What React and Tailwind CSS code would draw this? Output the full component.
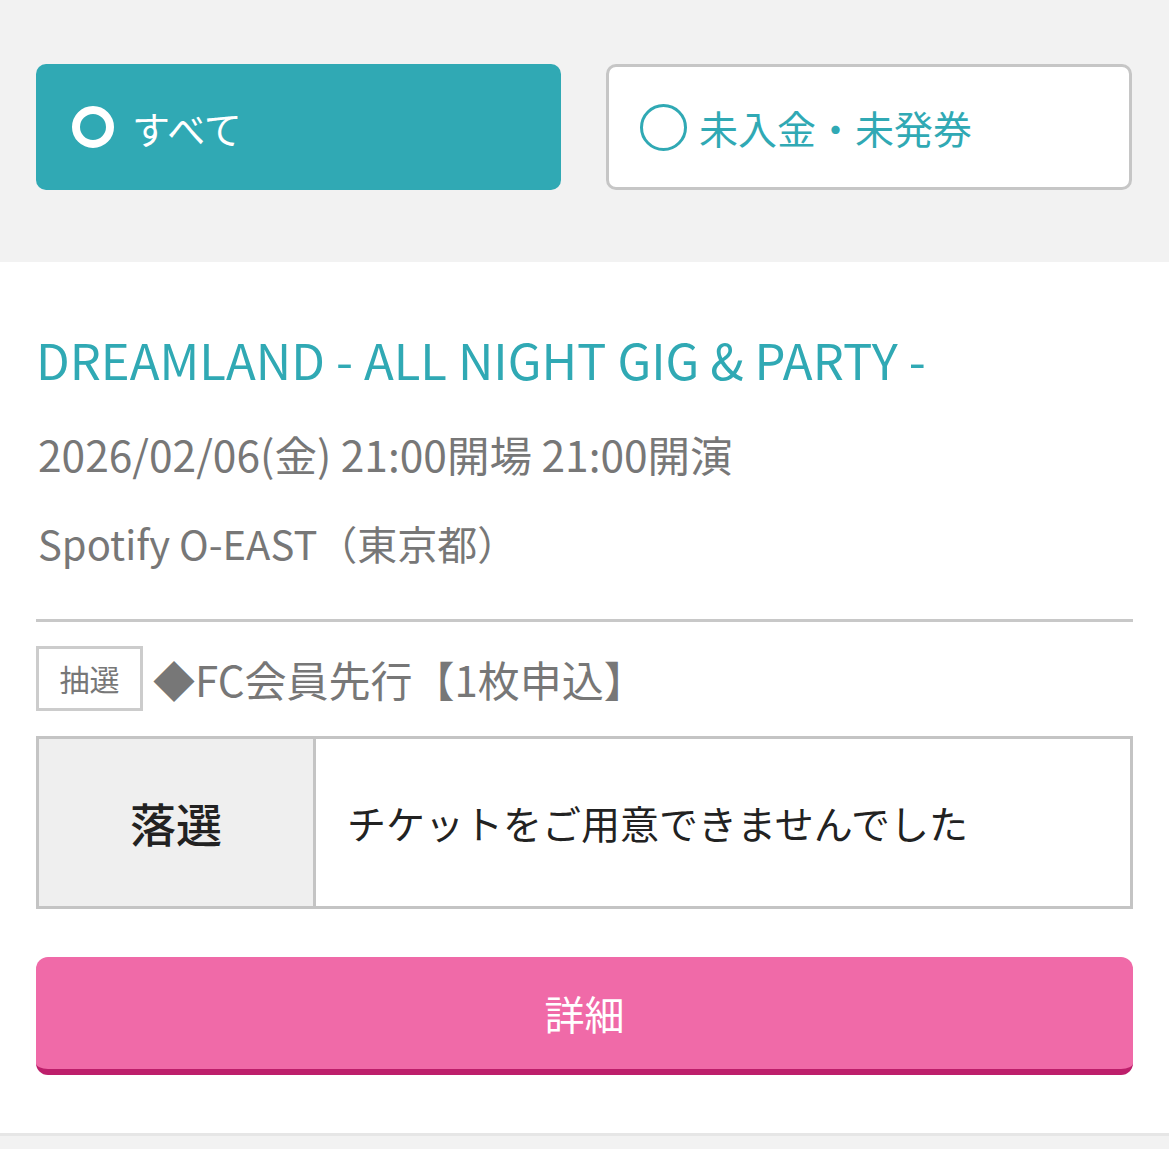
export default function App() {
  const font = { fontFamily: '"Noto Sans CJK JP", "Noto Sans", sans-serif' };
  return (
    <div className="min-h-[1149px] bg-[#f2f2f2]" style={font}>
      <div className="flex gap-[45px] pl-[36px] pr-[37px] pt-[64px] pb-[72px]">
        <button className="flex h-[126px] flex-1 items-center gap-[18px] rounded-[10px] bg-[#30a9b4] pl-[36px] text-[38px] text-white">
          <span className="box-border block h-[42px] w-[42px] rounded-full border-[8px] border-white" />
          <span>すべて</span>
        </button>
        <button className="flex h-[126px] flex-1 items-center gap-[12px] rounded-[10px] border-[3px] border-[#c6c6c6] bg-white pl-[31px] text-[39px] text-[#30a9b4]">
          <span className="box-border block h-[47px] w-[47px] rounded-full border-[3px] border-[#30a9b4]" />
          <span>未入金・未発券</span>
        </button>
      </div>
      <div className="border-b-[3px] border-[#e6e6e6] bg-white px-[36px] pt-[65px] pb-[58px]">
        <h2 className="text-[49px] leading-[64px] text-[#30a9b4]">DREAMLAND - ALL NIGHT GIG &amp; PARTY -</h2>
        <p className="mt-[37px] pl-[2px] text-[42.5px] leading-[52px] text-[#777777]">2026/02/06(金) 21:00開場 21:00開演</p>
        <p className="mt-[37px] pl-[2px] text-[40px] leading-[52px] text-[#777777]">Spotify O-EAST（東京都）</p>
        <div className="mt-[50px] h-[3px] bg-[#c8c8c8]" />
        <div className="mt-[24px] flex items-center gap-[10px]">
          <span className="flex h-[65px] w-[107px] items-center justify-center border-[3px] border-[#cccccc] text-[30px] text-[#777777]">抽選</span>
          <span className="text-[42px] leading-[52px] text-[#777777]">◆FC会員先行【1枚申込】</span>
        </div>
        <div className="mt-[25px] flex h-[173px] border-[3px] border-[#c4c4c4]">
          <div className="flex w-[277px] items-center justify-center border-r-[3px] border-[#c4c4c4] bg-[#efefef] text-[46px] font-medium text-[#222222]">落選</div>
          <div className="flex flex-1 items-center pl-[31px] text-[39px] text-[#222222]">チケットをご用意できませんでした</div>
        </div>
        <button className="mt-[48px] flex h-[118px] w-full items-center justify-center rounded-[12px] border-b-[6px] border-[#bd1f6b] bg-[#f06aa8] text-[40px] text-white">詳細</button>
      </div>
    </div>
  );
}
